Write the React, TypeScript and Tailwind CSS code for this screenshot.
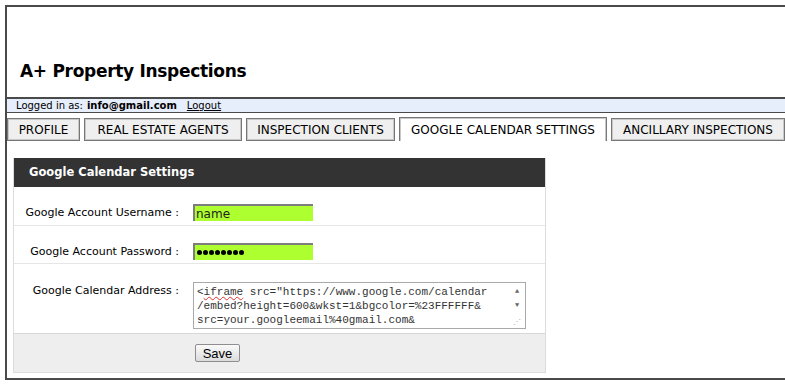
import React from 'react'

const tabs = [
  { label: 'PROFILE', w: 'w-[73px]' },
  { label: 'REAL ESTATE AGENTS', w: 'w-[158px]' },
  { label: 'INSPECTION CLIENTS', w: 'w-[149px]' },
  { label: 'GOOGLE CALENDAR SETTINGS', w: 'w-[208px]', active: true },
  { label: 'ANCILLARY INSPECTIONS', w: 'w-[174px]' },
]

export default function App() {
  return (
    <div className="h-[385px] w-[785px] overflow-hidden bg-white pl-[5px] pt-[5px] font-['DejaVu_Sans',sans-serif] text-black">
      <div className="h-[375px] border-l-2 border-t-2 border-b-2 border-[#4a4a4a]">
        {/* HEADER */}
        <div className="flex h-[90px] items-end pb-[17px] pl-[13px]">
          <h1 className="text-[17px] font-bold leading-none tracking-[-0.3px]">A+ Property Inspections</h1>
        </div>

        {/* LOGIN BAR */}
        <div className="flex h-[16px] items-center border-t-2 border-b border-[#4a4a4a] bg-[#e6edfb] pl-[9px] text-[10px] leading-none">
          <span>Logged in as:</span>
          <span className="ml-[4px] font-bold">info@gmail.com</span>
          <span className="ml-[10px] underline">Logout</span>
        </div>

        {/* TABS */}
        <div className="mt-[4px] flex items-end gap-[4px]">
          {tabs.map((t) => (
            <div
              key={t.label}
              className={
                t.active
                  ? `${t.w} flex h-[24px] items-center justify-center border border-b-0 border-[#777] bg-white pt-[1px] text-[12px] leading-none shadow-[inset_1px_1px_0_#c8c8c8,inset_-1px_0_0_#c8c8c8]`
                  : `${t.w} flex h-[23px] items-center justify-center border border-[#777] bg-[#efefef] text-[12px] leading-none shadow-[inset_1px_1px_0_#c8c8c8,inset_-1px_-1px_0_#c8c8c8]`
              }
            >
              {t.label}
            </div>
          ))}
        </div>

        {/* PANEL */}
        <div className="ml-[6px] mt-[17px] w-[533px] border-x border-b border-[#dcdcdc]">
          <div className="flex h-[29px] items-center bg-[#333333] pl-[15px] text-[11.5px] font-bold text-white">
            Google Calendar Settings
          </div>

          <div className="flex h-[39px] border-b border-[#e6e6e6] pt-[17px]">
            <div className="w-[165px] whitespace-nowrap pt-[3px] text-right text-[11px] leading-none">Google Account Username :</div>
            <div className="ml-[14px] flex h-[17px] w-[120px] items-center border-l-2 border-t-2 border-[#7d7d7d] bg-[#adff2f] pl-[1px] text-[12px] text-[#222]">
              name
            </div>
          </div>

          <div className="flex h-[38px] border-b border-[#e6e6e6] pt-[17px]">
            <div className="w-[165px] whitespace-nowrap pt-[3px] text-right text-[11px] leading-none">Google Account Password :</div>
            <div className="ml-[14px] flex h-[17px] w-[120px] items-center gap-[1px] border-l-2 border-t-2 border-[#7d7d7d] bg-[#adff2f] pl-[2px]">
              {Array.from({ length: 8 }).map((_, i) => (
                <span key={i} className="h-[5px] w-[5px] rounded-full bg-black" />
              ))}
            </div>
          </div>

          <div className="flex h-[69px] pt-[18px]">
            <div className="w-[165px] whitespace-nowrap pt-[3px] text-right text-[11px] leading-none">Google Calendar Address :</div>
            <div className="relative ml-[14px] h-[47px] w-[333px] overflow-hidden border border-[#a9a9a9] bg-white pl-[3px] pt-[2px] font-['Liberation_Mono',monospace] text-[11px] leading-[14px] text-[#333]">
              <div>
                &lt;<span className="underline decoration-[#e03030] decoration-wavy decoration-1">iframe</span> src="https://www.google.com/calendar
              </div>
              <div>/embed?height=600&amp;wkst=1&amp;bgcolor=%23FFFFFF&amp;</div>
              <div>src=your.googleemail%40gmail.com&amp;</div>
              <div className="absolute right-0 top-0 flex h-full w-[16px] flex-col items-center bg-white text-[7px] leading-none text-[#666]">
                <span className="mt-[5px]">▲</span>
                <span className="mt-[7px]">▼</span>
                <span className="mb-[2px] mt-auto text-[8px] text-[#aaa]">⋰</span>
              </div>
            </div>
          </div>

          <div className="flex h-[39px] items-center border-t border-[#d8d8d8] bg-[#eeeeee] pl-[181px]">
            <button className="h-[18px] w-[45px] rounded-[2px] border border-[#8e8e8e] bg-gradient-to-b from-[#fafafa] to-[#dcdcdc] font-['Liberation_Sans',sans-serif] text-[13px] leading-none">
              Save
            </button>
          </div>
        </div>
      </div>
    </div>
  )
}
